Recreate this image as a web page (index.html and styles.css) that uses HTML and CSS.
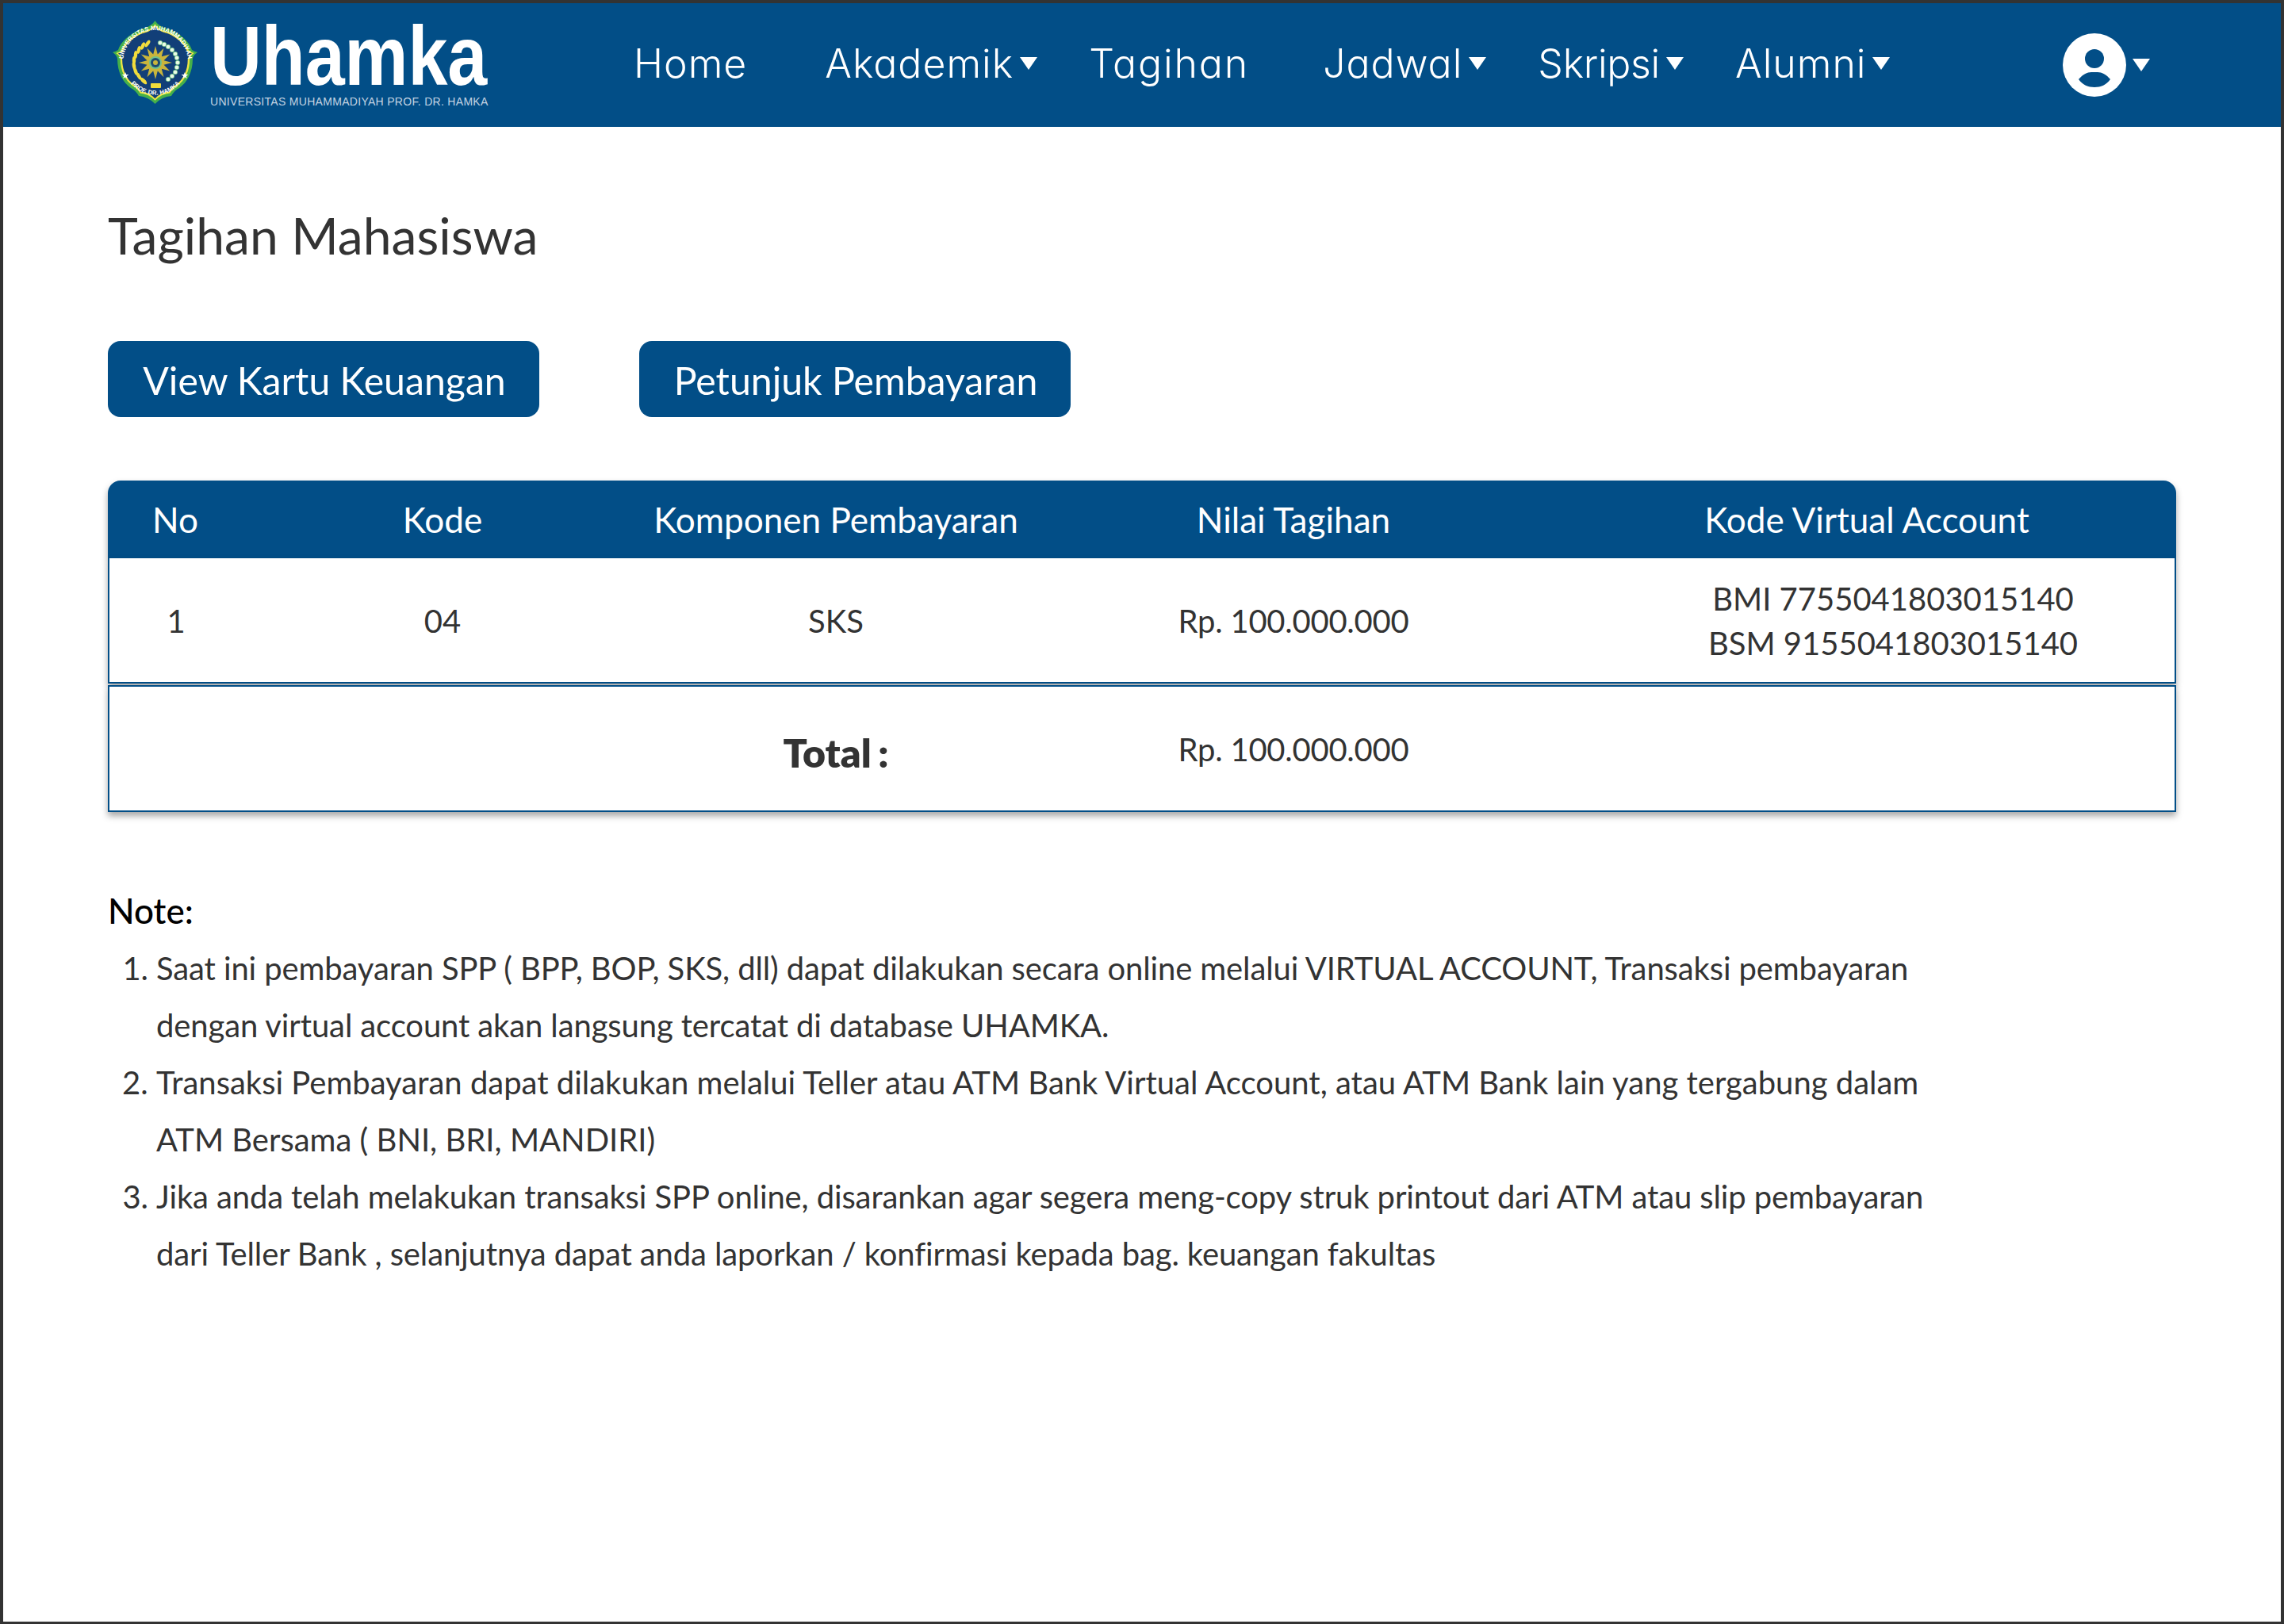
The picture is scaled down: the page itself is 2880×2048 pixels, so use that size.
FILE: index.html
```html
<!DOCTYPE html>
<html lang="id">
<head>
    <meta charset="UTF-8">
    <meta name="viewport" content="width=device-width, initial-scale=1.0">
    <title>Tagihan Mahasiswa - UHAMKA</title>
    <link rel="stylesheet" href="styles.css">
</head>
<body>
    <div class="page">
        <header class="navbar">
            <a href="#" class="logo">
                <svg class="crest" viewBox="0 0 107 105" width="107" height="105">
                    <defs>
                        <path id="crestShape" d="M53.5 0C57 6 64 9 72 11C86 17 97 27 100 37Q103 39 107 40Q102 43 101 48C101 65 94 78 84 85Q78 88 74 95Q62 96 53.5 105Q45 96 33 95Q29 88 23 85C13 78 6 65 6 48Q5 43 0 40Q4 39 7 37C10 27 21 17 35 11C43 9 50 6 53.5 0Z"/>
                        <path id="arcTop" d="M14 62A41 41 0 1 1 94 62"/>
                        <path id="arcBottom" d="M21 77A41 41 0 0 0 87 77"/>
                    </defs>
                    <use href="#crestShape" fill="#45b04a"/>
                    <use href="#crestShape" fill="#efe545" transform="translate(4.3 4.2) scale(.92)"/>
                    <use href="#crestShape" fill="#123f78" transform="translate(6.9 6.8) scale(.87)"/>
                    <text class="crest-text"><textPath href="#arcTop" startOffset="50%" text-anchor="middle">UNIVERSITAS MUHAMMADIYAH</textPath></text>
                    <text class="crest-text"><textPath href="#arcBottom" startOffset="50%" text-anchor="middle">PROF. DR. HAMKA</textPath></text>
                    <g fill="#f1dc3c">
                        <ellipse cx="44" cy="29" rx="2.2" ry="5" transform="rotate(35 44 29)"/>
                        <ellipse cx="38" cy="32" rx="2.2" ry="5" transform="rotate(25 38 32)"/>
                        <ellipse cx="33" cy="37" rx="2.2" ry="5" transform="rotate(15 33 37)"/>
                        <ellipse cx="29" cy="43" rx="2.2" ry="5" transform="rotate(5 29 43)"/>
                        <ellipse cx="27" cy="50" rx="2.2" ry="5"/>
                        <ellipse cx="27" cy="57" rx="2.2" ry="5" transform="rotate(-10 27 57)"/>
                        <ellipse cx="29" cy="64" rx="2.2" ry="5" transform="rotate(-20 29 64)"/>
                        <ellipse cx="33" cy="70" rx="2.2" ry="5" transform="rotate(-30 33 70)"/>
                        <ellipse cx="39" cy="76" rx="2.4" ry="5.5" transform="rotate(-45 39 76)"/>
                        <rect x="48" y="79" width="13" height="6" rx="1"/>
                    </g>
                    <g fill="#eafbe6" stroke="#4dbb6c" stroke-width=".6">
                        <circle cx="60" cy="28" r="2.8"/>
                        <circle cx="65" cy="30" r="2.8"/>
                        <circle cx="70" cy="33" r="2.8"/>
                        <circle cx="75" cy="37" r="2.8"/>
                        <circle cx="79" cy="42" r="2.8"/>
                        <circle cx="81" cy="47" r="2.8"/>
                        <circle cx="82" cy="53" r="2.8"/>
                        <circle cx="81" cy="59" r="2.8"/>
                        <circle cx="79" cy="65" r="2.8"/>
                        <circle cx="75" cy="70" r="2.8"/>
                        <circle cx="70" cy="74" r="2.8"/>
                    </g>
                    <polygon fill="#c9b53c" points="54,32 56.8,42.4 64.5,34.8 61.8,45.2 72.2,42.5 64.6,50.2 75,53 64.6,55.8 72.2,63.5 61.8,60.8 64.5,71.2 56.8,63.6 54,74 51.2,63.6 43.5,71.2 46.2,60.8 35.8,63.5 43.4,55.8 33,53 43.4,50.2 35.8,42.5 46.2,45.2 43.5,34.8 51.2,42.4"/>
                    <circle cx="54" cy="53" r="8" fill="#6fc28e"/>
                    <circle cx="54" cy="53" r="6" fill="#1d4a70"/>
                    <circle cx="54" cy="53" r="3" fill="#c9b53c"/>
                    <g fill="#fff">
                        <polygon points="16,65 17.2,68 20.4,68 17.8,70 18.8,73 16,71.2 13.2,73 14.2,70 11.6,68 14.8,68"/>
                        <polygon points="91,65 92.2,68 95.4,68 92.8,70 93.8,73 91,71.2 88.2,73 89.2,70 86.6,68 89.8,68"/>
                    </g>
                </svg>
                <div class="brand">
                    <span class="brand-name">Uhamka</span>
                    <span class="brand-sub">UNIVERSITAS MUHAMMADIYAH PROF. DR. HAMKA</span>
                </div>
            </a>
            <nav class="menu">
                <a href="#" class="menu-link">Home</a>
                <a href="#" class="menu-link has-caret">Akademik</a>
                <a href="#" class="menu-link">Tagihan</a>
                <a href="#" class="menu-link has-caret">Jadwal</a>
                <a href="#" class="menu-link has-caret">Skripsi</a>
                <a href="#" class="menu-link has-caret">Alumni</a>
            </nav>
            <a href="#" class="user">
                <svg viewBox="0 0 80 80" width="80" height="80">
                    <circle cx="40" cy="40" r="40" fill="#fff"/>
                    <circle cx="40" cy="32" r="12" fill="#024e87"/>
                    <path d="M20 58C25 52 31 49 36 49H44C49 49 55 52 60 58C55 65 48 68 40 68C32 68 25 65 20 58Z" fill="#024e87"/>
                </svg>
                <span class="caret"></span>
            </a>
        </header>

        <main class="content">
            <h1 class="title">Tagihan Mahasiswa</h1>

            <div class="actions">
                <a href="#" class="btn">View Kartu Keuangan</a>
                <a href="#" class="btn">Petunjuk Pembayaran</a>
            </div>

            <div class="bill">
                <div class="bill-row bill-head">
                    <div>No</div>
                    <div>Kode</div>
                    <div>Komponen Pembayaran</div>
                    <div>Nilai Tagihan</div>
                    <div>Kode Virtual Account</div>
                </div>
                <div class="bill-row bill-item">
                    <div>1</div>
                    <div>04</div>
                    <div>SKS</div>
                    <div class="bill-money">Rp. 100.000.000</div>
                    <div class="bill-va">BMI 7755041803015140<br>BSM 9155041803015140</div>
                </div>
                <div class="bill-row bill-total">
                    <div></div>
                    <div></div>
                    <div class="total-label">Total :</div>
                    <div class="bill-money">Rp. 100.000.000</div>
                    <div></div>
                </div>
            </div>

            <section class="note">
                <h2 class="note-title">Note:</h2>
                <ol class="note-list">
                    <li>Saat ini pembayaran SPP ( BPP, BOP, SKS, dll) dapat dilakukan secara online melalui VIRTUAL ACCOUNT, Transaksi pembayaran dengan virtual account akan langsung tercatat di database UHAMKA.</li>
                    <li>Transaksi Pembayaran dapat dilakukan melalui Teller atau ATM Bank Virtual Account, atau ATM Bank lain yang tergabung dalam ATM Bersama ( BNI, BRI, MANDIRI)</li>
                    <li>Jika anda telah melakukan transaksi SPP online, disarankan agar segera meng-copy struk printout dari ATM atau slip pembayaran dari Teller Bank , selanjutnya dapat anda laporkan / konfirmasi kepada bag. keuangan fakultas</li>
                </ol>
            </section>
        </main>
    </div>
</body>
</html>
```

FILE: styles.css
```css
:root {
    --primary: #024e87;
    --text: #333333;
}

* {
    margin: 0;
    padding: 0;
    box-sizing: border-box;
}

body {
    font-family: 'Lato', sans-serif;
    background: #fff;
    color: var(--text);
}

a {
    text-decoration: none;
    color: inherit;
}

.page {
    height: 2048px;
    border: 4px solid #333;
    border-bottom-width: 3px;
    overflow: hidden;
}

/* navbar */
.navbar {
    display: flex;
    align-items: center;
    height: 156px;
    padding-left: 138px;
    background: var(--primary);
    color: #fff;
}

.logo {
    display: flex;
    align-items: flex-start;
    gap: 16px;
    width: 608px;
    margin-top: -3px;
}

.crest {
    display: block;
    flex-shrink: 0;
}

.crest-text {
    font-family: 'Liberation Sans', sans-serif;
    font-size: 7.8px;
    font-weight: 700;
    fill: #fff;
}

.brand {
    display: flex;
    flex-direction: column;
}

.brand-name {
    font-family: 'Liberation Sans', sans-serif;
    font-size: 105px;
    font-weight: 700;
    line-height: 92px;
    height: 92px;
    margin-top: -1px;
    transform: scaleX(0.855);
    transform-origin: left center;
}

.brand-sub {
    margin-top: 3px;
    font-family: 'Liberation Sans', sans-serif;
    font-size: 14px;
    line-height: 16px;
    letter-spacing: 0.3px;
    color: #c3d3e2;
    white-space: nowrap;
}

.menu {
    display: flex;
    align-items: center;
    margin-top: -4px;
}

.menu-link {
    display: flex;
    align-items: center;
    padding: 0 49px;
    font-family: 'Inter', sans-serif;
    font-size: 50px;
    font-weight: 300;
    font-feature-settings: 'cv11';
    letter-spacing: 1px;
    line-height: 64px;
}

/* Tagihan and Skripsi run a bit wider/narrower than the rest */
.menu-link:nth-child(3) {
    padding-right: 44px;
    letter-spacing: 1.9px;
}

.menu-link:nth-child(5) {
    letter-spacing: -0.3px;
}

.menu-link.has-caret {
    padding-right: 16px;
}

.menu-link.has-caret::after,
.caret {
    content: '';
    display: block;
    width: 0;
    height: 0;
    margin-left: 8px;
    border-left: 11px solid transparent;
    border-right: 11px solid transparent;
    border-top: 16px solid #fff;
}

.user {
    display: flex;
    align-items: center;
    margin-left: 202px;
}

.user svg {
    display: block;
}

/* content */
.content {
    padding: 0 132px;
}

.title {
    margin-top: 102px;
    font-size: 64.2px;
    font-weight: 400;
    line-height: 70px;
}

.actions {
    display: flex;
    gap: 126px;
    margin-top: 98px;
}

.btn {
    display: flex;
    align-items: center;
    justify-content: center;
    width: 544px;
    height: 96px;
    padding: 2px 0 0 2px;
    border-radius: 16px;
    background: var(--primary);
    color: #fff;
    font-size: 48.2px;
}

.bill {
    margin-top: 80px;
    font-size: 40px;
}

.bill-row {
    display: grid;
    grid-template-columns: 170px 504px 488px 666px 1fr;
    align-items: center;
    text-align: center;
    background: #fff;
    box-shadow: 0 5px 8px rgba(0, 0, 0, 0.35);
}

.bill-head {
    height: 98px;
    padding-bottom: 2px;
    border-radius: 16px 16px 0 0;
    background: var(--primary);
    color: #fff;
    font-size: 44.1px;
}

.bill-item,
.bill-total {
    grid-template-columns: 168px 504px 488px 666px 1fr;
    padding-top: 2px;
    border: 2px solid var(--primary);
}

.bill-item {
    height: 158px;
    border-top: 0;
    margin-bottom: 2px;
}

.bill-total {
    height: 160px;
}

.bill-money {
    letter-spacing: -0.25px;
}

.bill-va {
    padding-left: 68px;
    line-height: 56px;
}

.total-label {
    padding-top: 8px;
    font-size: 50px;
    font-weight: 800;
    word-spacing: -3px;
}

/* note */
.note {
    margin-top: 88px;
}

.note-title {
    font-size: 44px;
    font-weight: 500;
    line-height: 72px;
    color: #000;
}

.note-list {
    width: 2340px;
    margin-top: 1px;
    padding-left: 61px;
    font-size: 40px;
    letter-spacing: -0.12px;
    line-height: 72px;
}

.note-list li:nth-child(2) {
    letter-spacing: 0;
}
```
